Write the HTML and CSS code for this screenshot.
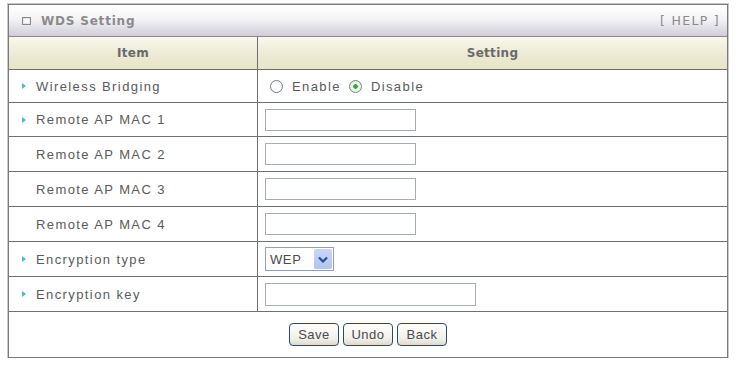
FILE: index.html
```html
<!DOCTYPE html>
<html lang="en">
<head>
    <meta charset="UTF-8">
    <title>WDS Setting</title>
    <link rel="stylesheet" href="styles.css">
</head>
<body>
    <div class="panel">
        <div class="title-bar">
            <span class="title">
                <svg class="title-icon" width="9" height="8" viewBox="0 0 9 8">
                    <rect x="0.5" y="0.5" width="8" height="7" fill="#e6e6e6" stroke="#8a8a8a"/>
                    <rect x="2" y="2" width="5" height="4" fill="#fafafa"/>
                </svg>
                WDS Setting
            </span>
            <a class="help" href="#">[ HELP ]</a>
        </div>

        <div class="row head">
            <div class="cell label">Item</div>
            <div class="cell">Setting</div>
        </div>

        <div class="row r1">
            <div class="cell label"><span class="arrow"></span>Wireless Bridging</div>
            <div class="cell value">
                <label class="radio"><input type="radio" name="wds" value="1"> Enable</label>
                <label class="radio"><input type="radio" name="wds" value="0" checked> Disable</label>
            </div>
        </div>
        <div class="row r2">
            <div class="cell label"><span class="arrow"></span>Remote AP MAC 1</div>
            <div class="cell value"><input class="text" type="text" name="mac1"></div>
        </div>
        <div class="row">
            <div class="cell label"><span class="arrow blank"></span>Remote AP MAC 2</div>
            <div class="cell value"><input class="text" type="text" name="mac2"></div>
        </div>
        <div class="row">
            <div class="cell label"><span class="arrow blank"></span>Remote AP MAC 3</div>
            <div class="cell value"><input class="text" type="text" name="mac3"></div>
        </div>
        <div class="row">
            <div class="cell label"><span class="arrow blank"></span>Remote AP MAC 4</div>
            <div class="cell value"><input class="text" type="text" name="mac4"></div>
        </div>
        <div class="row">
            <div class="cell label"><span class="arrow"></span>Encryption type</div>
            <div class="cell value">
                <div class="select">
                    <span class="select-text">WEP</span>
                    <span class="select-btn">
                        <svg width="10" height="7" viewBox="0 0 10 7">
                            <path d="M1 1.5 L5 5.5 L9 1.5" fill="none" stroke="#2b4a9c" stroke-width="2.2"/>
                        </svg>
                    </span>
                </div>
            </div>
        </div>
        <div class="row">
            <div class="cell label"><span class="arrow"></span>Encryption key</div>
            <div class="cell value"><input class="text wide" type="text" name="key"></div>
        </div>

        <div class="actions">
            <button class="btn">Save</button>
            <button class="btn">Undo</button>
            <button class="btn">Back</button>
        </div>
    </div>
</body>
</html>
```

FILE: styles.css
```css
body {
    margin: 0;
    padding: 4px 0 0 8px;
    background: #fff;
    font-family: 'Liberation Sans', Arial, sans-serif;
    color: #5a5a5a;
}
.panel {
    width: 718px;
    border: 1px solid #7a7a7a;
    box-shadow: 0 0 0 1px #c8c8c8;
}
.title-bar {
    height: 32px;
    display: flex;
    align-items: center;
    justify-content: space-between;
    padding: 0 7px 0 13px;
    background: linear-gradient(#ffffff, #f4f4f6 45%, #d0cdd8);
    border-bottom: 1px solid #8a8a8a;
    box-sizing: border-box;
}
.title {
    display: flex;
    align-items: center;
    font-family: 'DejaVu Sans', Verdana, sans-serif;
    font-size: 12px;
    font-weight: bold;
    color: #8a8a8a;
    letter-spacing: 0.8px;
}
.title-icon {
    margin-right: 10px;
}
.help {
    font-family: 'DejaVu Sans', Verdana, sans-serif;
    font-size: 12.5px;
    color: #8a8a8a;
    letter-spacing: 1.3px;
    text-decoration: none;
}
.row {
    display: grid;
    grid-template-columns: 249px 1fr;
    height: 35px;
    border-bottom: 1px solid #6f6f6f;
    box-sizing: border-box;
}
.row.head {
    height: 33px;
    background: linear-gradient(#f8f8ee, #ebe9d2 60%, #e6e4c8);
}
.row.r1 {
    height: 33px;
}
.row.r2 {
    height: 34px;
}
.cell {
    display: flex;
    align-items: center;
    font-size: 13px;
    letter-spacing: 1.4px;
}
.cell.label {
    border-right: 1px solid #6f6f6f;
    padding-left: 13px;
}
.head .cell {
    justify-content: center;
    padding: 0;
    font-family: 'DejaVu Sans', Tahoma, sans-serif;
    font-size: 12px;
    font-weight: bold;
    color: #6a6a6a;
    letter-spacing: 0.3px;
}
.arrow {
    width: 0;
    height: 0;
    border-top: 3.5px solid transparent;
    border-bottom: 3.5px solid transparent;
    border-left: 4px solid #46bfc9;
    margin-right: 10px;
}
.arrow.blank {
    border-left-color: transparent;
}
.value {
    padding-left: 7px;
}
.radio {
    display: flex;
    align-items: center;
    margin-right: 3px;
}
.radio input {
    appearance: none;
    -webkit-appearance: none;
    width: 13px;
    height: 13px;
    margin: 0 9px 0 5px;
    border: 1.5px solid #6d7d8c;
    border-radius: 50%;
    background: #fff;
    box-sizing: border-box;
}
.radio input:checked {
    border-color: #6e8a78;
    background: radial-gradient(circle, #35a54a 0 2px, #e9f5e2 2.5px);
}
.text {
    width: 151px;
    height: 22px;
    margin: 0;
    border: 1px solid #a5acb2;
    box-sizing: border-box;
    background: #fff;
}
.text.wide {
    width: 211px;
    height: 23px;
}
.select {
    display: flex;
    align-items: center;
    justify-content: space-between;
    width: 69px;
    height: 24px;
    border: 1px solid #8fa3b8;
    box-sizing: border-box;
    padding: 0 1px 0 4px;
    background: #fff;
}
.select-text {
    font-size: 13px;
    color: #4a4a4a;
    letter-spacing: 0.6px;
}
.select-btn {
    display: flex;
    align-items: center;
    justify-content: center;
    width: 18px;
    height: 20px;
    border-radius: 2px;
    background: linear-gradient(#c9d6f8, #b2c4f2);
}
.actions {
    height: 45px;
    display: flex;
    align-items: center;
    justify-content: center;
    gap: 4px;
}
.btn {
    width: 50px;
    height: 23px;
    padding: 0;
    border: 1px solid #2d4a63;
    border-radius: 4px;
    background: linear-gradient(#ffffff, #f1f0ea 70%, #dcdad0);
    font-family: 'Liberation Sans', Arial, sans-serif;
    font-size: 13px;
    color: #4a4a4a;
    letter-spacing: 0.5px;
}
```
